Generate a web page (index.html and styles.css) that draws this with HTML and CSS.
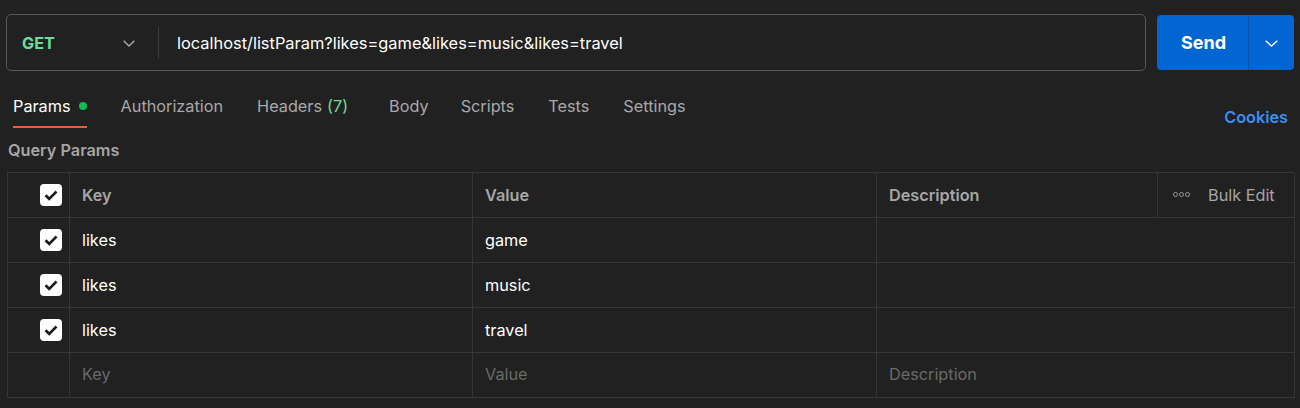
FILE: index.html
```html
<!DOCTYPE html>
<html>
<head>
<meta charset="utf-8">
<link rel="stylesheet" href="styles.css">
</head>
<body>
<div class="page">
  <div class="topbar">
    <div class="urlbox">
      <div class="method">
        <span class="method-name">GET</span>
        <svg class="chev" width="12" height="7" viewBox="0 0 12 7"><path d="M0.7 0.7 L6 6 L11.3 0.7" fill="none" stroke="#a8a8a8" stroke-width="1.4"/></svg>
      </div>
      <div class="divider"></div>
      <div class="url">localhost/listParam?likes=game&amp;likes=music&amp;likes=travel</div>
    </div>
    <div class="send">
      <div class="send-main">Send</div>
      <div class="send-drop">
        <svg width="13" height="7" viewBox="0 0 13 7"><path d="M0.7 0.7 L6.5 6 L12.3 0.7" fill="none" stroke="#ffffff" stroke-width="1.4"/></svg>
      </div>
    </div>
  </div>

  <div class="tabsrow">
    <div class="tabs">
      <div class="tab active">Params <span class="dot"></span></div>
      <div class="tab">Authorization</div>
      <div class="tab headers">Headers <span class="count">(7)</span></div>
      <div class="tab body-tab">Body</div>
      <div class="tab">Scripts</div>
      <div class="tab">Tests</div>
      <div class="tab">Settings</div>
    </div>
    <div class="cookies">Cookies</div>
  </div>

  <div class="section-title">Query Params</div>

  <div class="table">
    <div class="cell chk head"><span class="cb"><svg width="22" height="22" viewBox="0 0 22 22"><path d="M5.5 11.2 L9.2 14.8 L16.5 7.5" fill="none" stroke="#1b1b1b" stroke-width="2.6"/></svg></span></div>
    <div class="cell head">Key</div>
    <div class="cell head">Value</div>
    <div class="cell head">Description</div>
    <div class="cell head bulk"><span class="dots"><i></i><i></i><i></i></span><span>Bulk Edit</span></div>

    <div class="cell chk"><span class="cb"><svg width="22" height="22" viewBox="0 0 22 22"><path d="M5.5 11.2 L9.2 14.8 L16.5 7.5" fill="none" stroke="#1b1b1b" stroke-width="2.6"/></svg></span></div>
    <div class="cell">likes</div>
    <div class="cell">game</div>
    <div class="cell span2"></div>

    <div class="cell chk"><span class="cb"><svg width="22" height="22" viewBox="0 0 22 22"><path d="M5.5 11.2 L9.2 14.8 L16.5 7.5" fill="none" stroke="#1b1b1b" stroke-width="2.6"/></svg></span></div>
    <div class="cell">likes</div>
    <div class="cell">music</div>
    <div class="cell span2"></div>

    <div class="cell chk"><span class="cb"><svg width="22" height="22" viewBox="0 0 22 22"><path d="M5.5 11.2 L9.2 14.8 L16.5 7.5" fill="none" stroke="#1b1b1b" stroke-width="2.6"/></svg></span></div>
    <div class="cell">likes</div>
    <div class="cell">travel</div>
    <div class="cell span2"></div>

    <div class="cell chk last"></div>
    <div class="cell ph last">Key</div>
    <div class="cell ph last">Value</div>
    <div class="cell ph span2 last">Description</div>
  </div>
</div>
</body>
</html>
```

FILE: styles.css
```css
* { box-sizing: border-box; }
html, body {
  margin: 0;
  padding: 0;
  background: #212121;
}
body {
  font-family: Inter, "Noto Sans", sans-serif;
  font-size: 16.25px;
  color: #ffffff;
  width: 1300px;
  height: 408px;
  overflow: hidden;
}
.page {
  padding: 14px 6px 0 6px;
}
.topbar {
  display: flex;
  gap: 11px;
  height: 57px;
}
.urlbox {
  flex: 1;
  display: flex;
  align-items: center;
  border: 1px solid #565656;
  border-radius: 5px;
  height: 57px;
}
.method {
  width: 151px;
  display: flex;
  align-items: center;
  justify-content: space-between;
  padding: 0 23px 0 15px;
}
.method-name {
  color: #6bdc9a;
  font-weight: 700;
}
.chev { display: block; margin-top: 1px; }
.divider {
  width: 1px;
  height: 32px;
  background: #3d3d3d;
}
.url {
  padding-left: 18px;
  font-size: 16.4px;
  color: #ffffff;
}
.send {
  display: flex;
  width: 137px;
  height: 55px;
  margin-top: 1px;
  background: #0265d2;
  border-radius: 4px;
  overflow: hidden;
}
.send-main {
  width: 92px;
  display: flex;
  align-items: center;
  justify-content: center;
  font-weight: 700;
  font-size: 18px;
  color: #ffffff;
  border-right: 1px solid #0254ad;
  padding-left: 2px;
}
.send-drop {
  flex: 1;
  display: flex;
  align-items: center;
  justify-content: center;
  padding-top: 1px;
}
.tabsrow {
  display: flex;
  justify-content: space-between;
  align-items: flex-start;
  height: 65px;
  padding-top: 25px;
}
.tabs {
  display: flex;
  gap: 34px;
  padding-left: 7px;
}
.tab {
  color: #a9a9a9;
  line-height: 20px;
  height: 32px;
  display: flex;
  align-items: flex-start;
}
.tab.active {
  color: #ffffff;
  border-bottom: 2px solid #e5603b;
}
.dot {
  display: inline-block;
  width: 8px;
  height: 8px;
  border-radius: 50%;
  background: #0cbb52;
  margin-left: 8px;
  margin-top: 6px;
}
.count { color: #6bdc9a; margin-left: 5px; }
.headers { margin-right: 7px; }
.body-tab { margin-right: -2px; }
.cookies {
  color: #3d8ef2;
  font-weight: 600;
  padding-top: 11px;
  padding-right: 6px;
}
.section-title {
  color: #a6a6a6;
  font-weight: 600;
  line-height: 20px;
  padding-left: 2px;
  height: 32px;
  margin-top: 4px;
}
.table {
  display: grid;
  grid-template-columns: 62px 403px 404px 281px 137px;
  grid-auto-rows: 45px;
  border-top: 1px solid #363636;
  border-left: 1px solid #363636;
  margin-left: 1px;
}
.cell {
  display: flex;
  align-items: center;
  padding-left: 12px;
  padding-bottom: 1px;
  border-right: 1px solid #363636;
  border-bottom: 1px solid #363636;
  color: #ffffff;
}
.cell.head {
  color: #a6a6a6;
  font-weight: 600;
}
.cell.ph { padding-bottom: 3px; }
.cell.chk {
  justify-content: flex-end;
  padding-left: 0;
  padding-right: 7px;
}
.cb {
  width: 22px;
  height: 22px;
  background: #ffffff;
  border-radius: 4px;
  display: block;
}
.cb svg { display: block; }
.span2 { grid-column: span 2; }
.ph { color: #6a6a6a; }
.bulk {
  font-weight: 400 !important;
  padding-left: 15px;
  gap: 18px;
}
.dots { display: flex; gap: 1px; }
.dots i {
  display: block;
  width: 5px;
  height: 5px;
  border: 1px solid #9a9a9a;
  border-radius: 50%;
}
```
